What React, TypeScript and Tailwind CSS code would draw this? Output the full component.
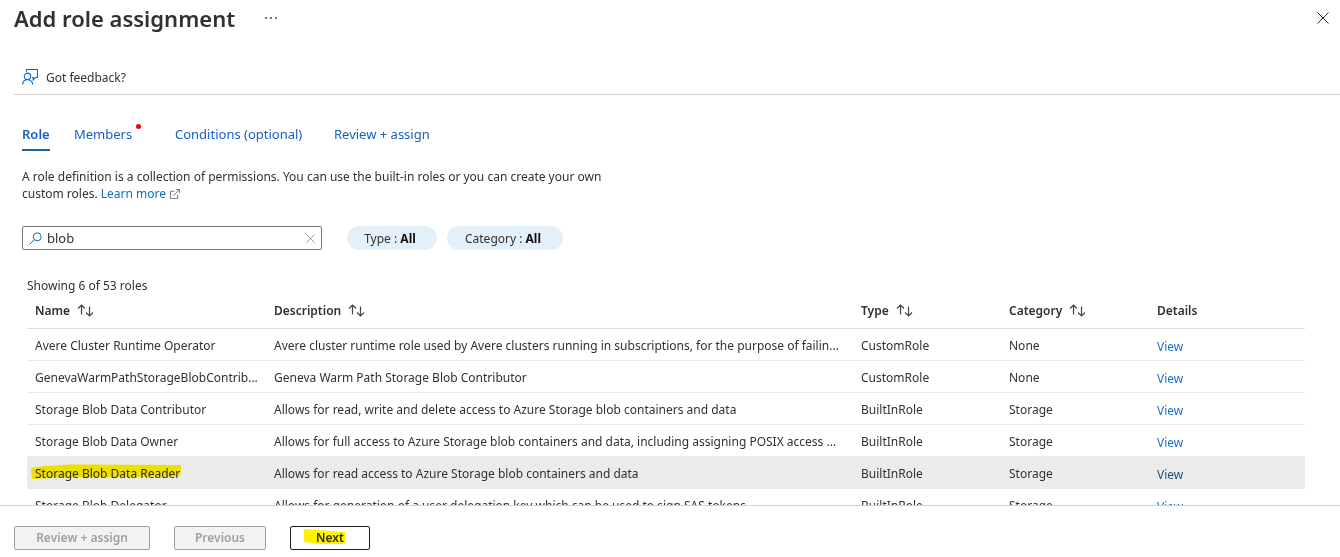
import React, { useState } from "react";

type Role = {
  name: string;
  description: string;
  type: string;
  category: string;
  selected?: boolean;
};

const roles: Role[] = [
  {
    name: "Avere Cluster Runtime Operator",
    description:
      "Avere cluster runtime role used by Avere clusters running in subscriptions, for the purpose of failin...",
    type: "CustomRole",
    category: "None",
  },
  {
    name: "GenevaWarmPathStorageBlobContrib...",
    description: "Geneva Warm Path Storage Blob Contributor",
    type: "CustomRole",
    category: "None",
  },
  {
    name: "Storage Blob Data Contributor",
    description: "Allows for read, write and delete access to Azure Storage blob containers and data",
    type: "BuiltInRole",
    category: "Storage",
  },
  {
    name: "Storage Blob Data Owner",
    description:
      "Allows for full access to Azure Storage blob containers and data, including assigning POSIX access ...",
    type: "BuiltInRole",
    category: "Storage",
  },
  {
    name: "Storage Blob Data Reader",
    description: "Allows for read access to Azure Storage blob containers and data",
    type: "BuiltInRole",
    category: "Storage",
    selected: true,
  },
  {
    name: "Storage Blob Delegator",
    description: "Allows for generation of a user delegation key which can be used to sign SAS tokens",
    type: "BuiltInRole",
    category: "Storage",
  },
];

const columns = [
  { label: "Name", sortable: true },
  { label: "Description", sortable: true },
  { label: "Type", sortable: true },
  { label: "Category", sortable: true },
  { label: "Details", sortable: false },
];

function CloseIcon({ className }: { className: string }) {
  return (
    <svg viewBox="0 0 12 12" className={className} fill="none" stroke="currentColor" aria-hidden="true">
      <path d="M0.5 0.5 L11.5 11.5 M11.5 0.5 L0.5 11.5" />
    </svg>
  );
}

function FeedbackIcon() {
  return (
    <svg viewBox="0 0 16 16" className="size-4 text-[#0f6cbd]" fill="none" stroke="currentColor" strokeWidth="1.1" aria-hidden="true">
      <path d="M4.5 2.8V0.5H15.5V8.5H13.5L11.2 10.8V8.5H10" />
      <circle cx="5.5" cy="7.3" r="3.2" />
      <path d="M0.6 15.6C0.8 12.5 3 10.6 5.5 10.6S10.5 12.5 10.8 15.6" />
    </svg>
  );
}

function SearchIcon() {
  return (
    <svg viewBox="0 0 13 13" className="size-[13px] shrink-0 text-[#0f6cbd]" fill="none" stroke="currentColor" aria-hidden="true">
      <circle cx="8.2" cy="4.8" r="4" />
      <path d="M5.3 7.7L0.6 12.4" />
    </svg>
  );
}

function ExternalIcon() {
  return (
    <svg viewBox="0 0 11 11" className="ml-1 inline-block size-[10px] align-[-1px] text-[#605e5c]" fill="none" stroke="currentColor" strokeWidth="0.9" aria-hidden="true">
      <path d="M5 2.5H0.5V10.5H8.5V6M3.6 7.4L10.4 0.6M6.4 0.5H10.5V4.6" />
    </svg>
  );
}

function SortIcon() {
  return (
    <svg viewBox="0 0 17 13" className="h-[13px] w-[17px] text-[#484644]" fill="none" stroke="currentColor" strokeWidth="1.2" aria-hidden="true">
      <path d="M4.5 10.5V1M1 4.5L4.5 1L8 4.5M12.5 2.5V12M9 8.5L12.5 12L16 8.5" />
    </svg>
  );
}

function NameMarker() {
  return (
    <svg viewBox="0 0 152 16" className="absolute -top-px -left-1 h-4 w-[152px] mix-blend-multiply" aria-hidden="true">
      <path d="M0 4L14 2L40 0.5L150 1V8L148 12.5L60 13L20 14L1 15Z" fill="#fff200" />
    </svg>
  );
}

function NextMarker() {
  return (
    <svg viewBox="0 0 42 15" className="absolute top-0 -left-3 h-[15px] w-[42px] mix-blend-multiply" aria-hidden="true">
      <path d="M0 0L14 1L41 3V15H14L0 13Z" fill="#fff200" />
    </svg>
  );
}

export default function App() {
  const [query, setQuery] = useState("blob");

  return (
    <div className="flex h-screen flex-col bg-white font-['Noto_Sans','Open_Sans',sans-serif] text-[12px] leading-[17px] text-[#323130]">
      <main className="min-h-0 flex-1 overflow-hidden">
        <header className="flex h-9 items-center pr-[11px] pl-[14px]">
          <h1 className="text-[22px] leading-[34px] font-semibold">Add role assignment</h1>
          <button type="button" aria-label="More options" className="ml-7 flex h-5 w-4 items-center justify-center gap-[3px]">
            <span className="size-[2px] bg-[#797775]" />
            <span className="size-[2px] bg-[#797775]" />
            <span className="size-[2px] bg-[#797775]" />
          </button>
          <button type="button" aria-label="Close" className="ml-auto">
            <CloseIcon className="size-3 text-[#323130]" />
          </button>
        </header>

        <div className="mt-6 ml-[14px] flex h-[35px] items-center border-b border-[#d2d0ce] px-2">
          <button type="button" className="flex items-center gap-2">
            <FeedbackIcon />
            Got feedback?
          </button>
        </div>

        <nav className="mt-7 flex items-start pl-[22px] text-[13px] leading-[22px] text-[#1b5fc1]" aria-label="Steps">
          <a href="#role" className="w-7 border-b-2 border-[#1b62a5] pb-1 font-semibold">
            Role
          </a>
          <a href="#members" className="relative ml-6 w-[101px]">
            Members
            <span className="absolute top-px left-[62px] size-[5px] rounded-full bg-[#f00014]" />
          </a>
          <a href="#conditions" className="w-[159px]">
            Conditions (optional)
          </a>
          <a href="#review">Review + assign</a>
        </nav>

        <p className="mt-[17px] ml-[22px] max-w-[640px]">
          A role definition is a collection of permissions. You can use the built-in roles or you can create your own
          <br />
          custom roles.{" "}
          <a href="#learn" className="text-[#0f6cbd]">
            Learn more
            <ExternalIcon />
          </a>
        </p>

        <div className="mt-6 flex items-center pl-[22px]">
          <div className="flex h-6 w-[300px] items-center rounded-xs border border-[#797775] px-[6px]">
            <SearchIcon />
            <input
              type="text"
              aria-label="Search roles"
              value={query}
              onChange={(e) => setQuery(e.target.value)}
              className="ml-[5px] min-w-0 flex-1 text-[13px] outline-none"
            />
            <button type="button" aria-label="Clear search" onClick={() => setQuery("")}>
              <CloseIcon className="size-[9px] text-[#797775]" />
            </button>
          </div>
          <button type="button" className="ml-[25px] h-6 w-[90px] rounded-full bg-[#e3f0fa] pr-1">
            Type : <b className="text-[#11100f]">All</b>
          </button>
          <button type="button" className="ml-[10px] h-6 w-[116px] rounded-full bg-[#e3f0fa] pr-1">
            Category : <b className="text-[#11100f]">All</b>
          </button>
        </div>

        <section className="mt-[27px] mr-[35px] ml-[27px]">
          <p>Showing 6 of 53 roles</p>
          <table className="w-full table-fixed text-left">
            <colgroup>
              <col className="w-[239px]" />
              <col />
              <col className="w-[148px]" />
              <col className="w-[148px]" />
              <col className="w-[156px]" />
            </colgroup>
            <thead>
              <tr className="h-[34px] border-b border-[#e1dfdd]">
                {columns.map((c) => (
                  <th key={c.label} className="px-2 font-semibold">
                    {c.sortable ? (
                      <button type="button" className="flex items-center gap-[7px]">
                        {c.label}
                        <SortIcon />
                      </button>
                    ) : (
                      c.label
                    )}
                  </th>
                ))}
              </tr>
            </thead>
            <tbody>
              {roles.map((r) => (
                <tr
                  key={r.name}
                  className={r.selected ? "h-8 border-b border-[#edebe9] bg-[#edebe9]" : "h-8 border-b border-[#edebe9]"}
                >
                  <td className="pt-[3px] pl-2 whitespace-nowrap">
                    {r.selected ? (
                      <span className="relative inline-block">
                        {r.name}
                        <NameMarker />
                      </span>
                    ) : (
                      r.name
                    )}
                  </td>
                  <td className="pt-[3px] pl-2 whitespace-nowrap">{r.description}</td>
                  <td className="px-2 pt-[3px]">{r.type}</td>
                  <td className="px-2 pt-[3px]">{r.category}</td>
                  <td className="px-2 pt-[5px]">
                    <a href="#view" className={r.selected ? "text-[#1f4e79]" : "text-[#1f6cc5]"}>
                      View
                    </a>
                  </td>
                </tr>
              ))}
            </tbody>
          </table>
        </section>
      </main>

      <footer className="flex h-[52px] shrink-0 items-center gap-6 border-t border-[#d2d0ce] px-[14px] pt-3">
        <button type="button" disabled className="h-6 w-[136px] rounded-xs border border-[#a19f9d] bg-[#f3f2f1] font-semibold text-[#a19f9d]">
          Review + assign
        </button>
        <button type="button" disabled className="h-6 w-[92px] rounded-xs border border-[#a19f9d] bg-[#f3f2f1] font-semibold text-[#a19f9d]">
          Previous
        </button>
        <button type="button" className="h-6 w-20 rounded-xs border border-[#201f1e] font-semibold">
          <span className="relative inline-block">
            Next
            <NextMarker />
          </span>
        </button>
      </footer>
    </div>
  );
}
